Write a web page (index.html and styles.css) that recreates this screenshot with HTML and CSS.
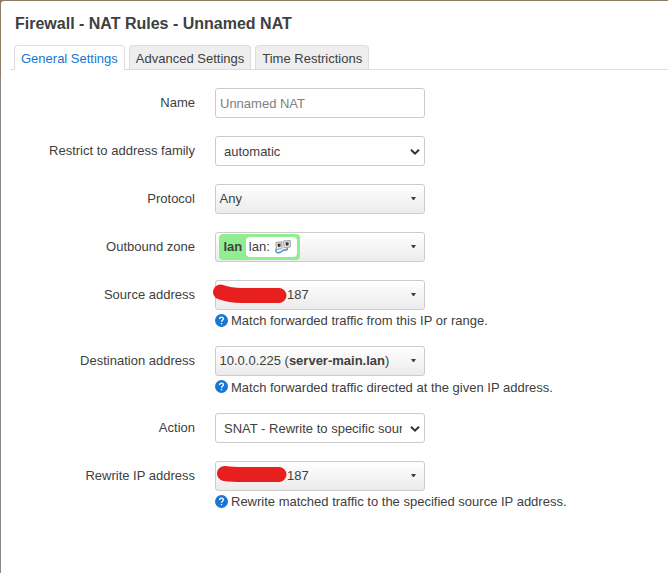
FILE: index.html
```html
<!DOCTYPE html>
<html lang="en">
<head>
<meta charset="utf-8">
<title>Firewall - NAT Rules</title>
<link rel="stylesheet" href="styles.css">
</head>
<body>
<main class="modal">
  <h4 class="title">Firewall - NAT Rules - Unnamed NAT</h4>
  <ul class="tabs">
    <li class="tab active">General Settings</li>
    <li class="tab">Advanced Settings</li>
    <li class="tab">Time Restrictions</li>
  </ul>
  <form class="form">
    <div class="row">
      <label class="label">Name</label>
      <div class="field"><input class="control input" type="text" placeholder="Unnamed NAT"></div>
    </div>
    <div class="row">
      <label class="label">Restrict to address family</label>
      <div class="field"><div class="control select"><span class="clip">automatic</span><svg class="chevron" viewBox="0 0 10 8"><path d="M1 1.700 5 5.700 9 1.700"/></svg></div></div>
    </div>
    <div class="row">
      <label class="label">Protocol</label>
      <div class="field"><div class="control dropdown"><span>Any</span><i class="arrow"></i></div></div>
    </div>
    <div class="row">
      <label class="label">Outbound zone</label>
      <div class="field"><div class="control dropdown"><span class="zone"><strong>lan</strong><span class="network">lan: <svg class="ports" viewBox="0 0 16 16">
        <path d="M1.500 10C0 12 1.500 14.500 4.500 13.500S7.500 10.500 10 11 13 9.500 12 7.500" fill="none" stroke="#4c83c3" stroke-width="1.400"/>
        <path d="M.8 3.500 7 2.800V9.600L1.500 10.500ZM8.500 2 15.300 1.500V8L9.200 9Z" fill="#e4e4e0" stroke="#999" stroke-width=".9"/>
        <path d="M2.500 5 5.500 4.500V7.500L3 8ZM10.500 3.600 13.500 3.300V6.300L11 6.800Z" fill="#333"/>
      </svg></span></span><i class="arrow"></i></div></div>
    </div>
    <div class="row">
      <label class="label">Source address</label>
      <div class="field">
        <div class="control dropdown"><span class="masked">187</span><i class="arrow"></i>
          <svg class="redaction" viewBox="0 0 80 30"><path d="M10.500 12Q20 15.500 32 15.500H69" fill="none" stroke="#e71f1e" stroke-width="15" stroke-linecap="round" stroke-linejoin="round"/></svg>
        </div>
        <div class="help"><svg class="question" viewBox="0 0 14 14"><circle cx="7" cy="7" r="7"/><path d="M5 5.500C5 2.700 9 2.800 9 5.200 9 6.700 7 6.700 7 8.400M7 9.700V11.100"/></svg>Match forwarded traffic from this IP or range.</div>
      </div>
    </div>
    <div class="row">
      <label class="label">Destination address</label>
      <div class="field">
        <div class="control dropdown"><span>10.0.0.225 (<strong>server-main.lan</strong>)</span><i class="arrow"></i></div>
        <div class="help tall"><svg class="question" viewBox="0 0 14 14"><circle cx="7" cy="7" r="7"/><path d="M5 5.500C5 2.700 9 2.800 9 5.200 9 6.700 7 6.700 7 8.400M7 9.700V11.100"/></svg>Match forwarded traffic directed at the given IP address.</div>
      </div>
    </div>
    <div class="row">
      <label class="label">Action</label>
      <div class="field"><div class="control select"><span class="clip">SNAT - Rewrite to specific source IP or port</span><svg class="chevron" viewBox="0 0 10 8"><path d="M1 1.700 5 5.700 9 1.700"/></svg></div></div>
    </div>
    <div class="row">
      <label class="label">Rewrite IP address</label>
      <div class="field">
        <div class="control dropdown"><span class="masked">187</span><i class="arrow"></i>
          <svg class="redaction" viewBox="0 0 80 30"><path d="M14.500 12.500Q22 13.500 34 13.500H69" fill="none" stroke="#e71f1e" stroke-width="15" stroke-linecap="round"/></svg>
        </div>
        <div class="help"><svg class="question" viewBox="0 0 14 14"><circle cx="7" cy="7" r="7"/><path d="M5 5.500C5 2.700 9 2.800 9 5.200 9 6.700 7 6.700 7 8.400M7 9.700V11.100"/></svg>Rewrite matched traffic to the specified source IP address.</div>
      </div>
    </div>
  </form>
</main>
</body>
</html>
```

FILE: styles.css
```css
* { box-sizing: border-box; }
body {
  margin: 0;
  height: 573px;
  overflow: hidden;
  padding: 1px 0 0 1px;
  background: linear-gradient(#8b7d60 0 76px, #898989 78px);
  color: #404040;
  font: 13px/18px "Liberation Sans", Arial, sans-serif;
}
.modal {
  height: 572px;
  padding: 9px 0 0 9px;
  background: #fff;
  border-radius: 3px 0 0 0;
}
.title { margin: 0 0 9px 5px; padding-top: 1px; font-size: 16px; line-height: 25px; }
.tabs {
  display: flex;
  gap: 4px;
  height: 25px;
  margin: 0;
  padding: 0 0 0 4px;
  border-bottom: 1px solid #ddd;
  list-style: none;
}
.tab {
  height: 24px;
  padding: 0 6px;
  border: 1px solid #ddd;
  border-bottom: 0;
  border-radius: 4px 4px 0 0;
  background: #eee;
  line-height: 25px;
  white-space: nowrap;
}
.tab.active { height: 25px; background: #fff; color: #1976d2; }
.form { padding-top: 18px; }
.row { display: flex; margin-bottom: 18px; }
.label { width: 185px; margin-right: 20px; line-height: 29px; text-align: right; }
.control {
  position: relative;
  display: flex;
  align-items: center;
  width: 210px;
  height: 30px;
  border: 1px solid #ccc;
  border-radius: 3px;
  background: #fff;
  color: #404040;
  font: inherit;
}
.input { padding: 0 4px; }
.input::placeholder { color: #808080; opacity: 1; }
.select { padding: 1px 4px 0 8px; }
.clip { width: 178px; margin-right: 8px; overflow: hidden; white-space: nowrap; }
.chevron { flex: none; width: 10px; height: 8px; fill: none; stroke: #333; stroke-width: 2; }
.dropdown { justify-content: space-between; padding: 0 7px 0 3.5px; background: linear-gradient(#fff, #ebebeb); }
.arrow { width: 5px; height: 3px; margin: 0 1px 1px 0; background: #404040; clip-path: polygon(0 0, 100% 0, 60% 100%, 40% 100%); }
.zone {
  display: flex;
  align-items: center;
  gap: 4px;
  height: 26px;
  margin-left: -.5px;
  padding: 0 3px 0 4.5px;
  border-radius: 4px;
  background: #90ee90;
}
.network { display: flex; align-items: center; gap: 5px; height: 20px; padding: 0 6px 0 2.5px; border-radius: 4px; background: #fff; }
.ports { width: 16px; height: 16px; }
.masked { padding-left: 67.5px; }
.redaction { position: absolute; left: -6px; top: -1px; width: 80px; height: 30px; }
.help { display: flex; align-items: center; gap: 3px; height: 18px; padding-top: 4px; }
.help.tall { height: 19px; }
.question { width: 13px; height: 13px; margin-top: -2px; fill: #1976d2; }
.question path { fill: none; stroke: #fff; stroke-width: 1.5; }
```
